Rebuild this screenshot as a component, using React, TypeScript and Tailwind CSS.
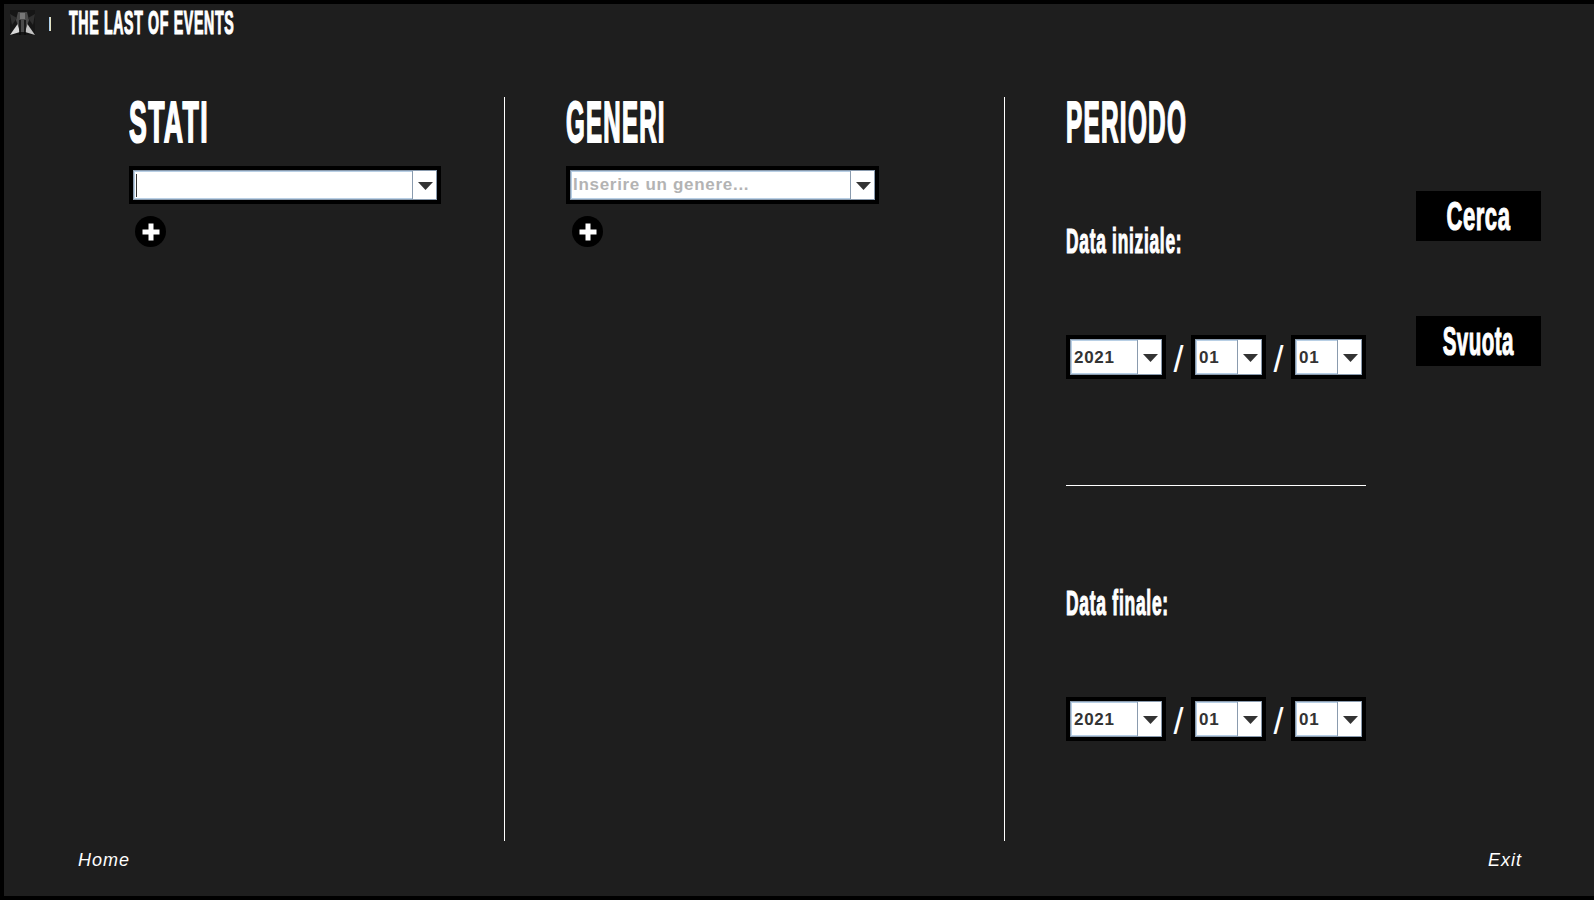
const anton = "font-['Liberation_Sans_Narrow','Liberation_Sans',sans-serif] font-bold text-white";

function Arrow() {
  return (
    <svg width="15" height="8" viewBox="0 0 15 8" className="mt-[1px] ml-[1px] block">
      <path d="M0 0H15L7.5 8Z" fill="#333333" />
    </svg>
  );
}

function Combo({
  outer,
  h = "h-[44px]",
  text,
  placeholder,
  caret,
}: {
  outer: string;
  h?: string;
  text?: string;
  placeholder?: string;
  caret?: boolean;
}) {
  return (
    <div className={`${outer} ${h} bg-black p-[4px] shrink-0`}>
      <div className="flex h-full w-full border border-[#8a9bae] bg-white">
        <div className="flex min-w-0 flex-1 items-center overflow-hidden border border-[#b8cfe5] border-r-0 pl-[2px] pt-[1px] font-['Liberation_Sans',sans-serif] text-[17px] font-bold tracking-[0.7px] text-[#333333]">
          {caret && <span className="-ml-[1px] h-[23px] w-[1px] bg-[#333333]" />}
          {text}
          {placeholder && <span className="-ml-[1px] pb-[2px] text-[#b3b3b3]">{placeholder}</span>}
        </div>
        <div className="flex w-[24px] items-center justify-center border-l border-[#8a9bae]">
          <Arrow />
        </div>
      </div>
    </div>
  );
}

function Plus() {
  return (
    <div className="ml-[6px] mt-[12px] flex h-[31px] w-[31px] items-center justify-center rounded-full bg-black">
      <svg width="18" height="18" viewBox="0 0 18 18">
        <path d="M6.5 0.5H11.5V6.5H17.5V11.5H11.5V17.5H6.5V11.5H0.5V6.5H6.5Z" fill="#ffffff" />
      </svg>
    </div>
  );
}

function Heading({ children, scale }: { children: string; scale: string }) {
  return (
    <h2 className={`${anton} ${scale} h-[69px] w-[300px] whitespace-nowrap text-[58px] leading-[50px] tracking-[3px] origin-top-left [-webkit-text-stroke:2px_white]`}>
      {children}
    </h2>
  );
}

function DateRow() {
  return (
    <div className="flex h-[44px] w-[300px] items-center">
      <Combo outer="w-[100px]" text="2021" />
      <Slash />
      <Combo outer="w-[75px]" text="01" />
      <Slash />
      <Combo outer="w-[75px]" text="01" />
    </div>
  );
}

function Slash() {
  return (
    <span className="w-[25px] pt-[5px] text-center font-['Liberation_Sans',sans-serif] text-[36px] leading-none text-white">/</span>
  );
}

function Label({ children, scale }: { children: string; scale: string }) {
  return (
    <div className={`${anton} ${scale} h-[32px] whitespace-nowrap text-[35px] leading-[32px] tracking-[1.5px] origin-top-left [-webkit-text-stroke:1.2px_white]`}>
      {children}
    </div>
  );
}

function ActionButton({ children, scale }: { children: string; scale: string }) {
  return (
    <button className="flex h-[50px] w-[125px] items-center justify-center bg-black">
      <span className={`${anton} ${scale} whitespace-nowrap text-[41px] leading-none tracking-[1px] [-webkit-text-stroke:1.2px_white]`}>
        {children}
      </span>
    </button>
  );
}

export default function App() {
  return (
    <div className="flex h-[900px] w-[1594px] flex-col overflow-hidden border-4 border-r-0 border-black bg-[#1e1e1e]">
      <header className="flex h-[33px] shrink-0 items-start pl-[6px] pt-[6px]">
        <svg width="25" height="25" viewBox="0 0 25 25" className="shrink-0">
          <rect width="25" height="25" fill="#161616" />
          <path d="M0 25L9 12L10 22Z" fill="#d8d8d8" />
          <path d="M25 25L16 12L15 22Z" fill="#c4c4c4" />
          <path d="M8 2H17L19 10L15 22H10L6 10Z" fill="#4a4a4a" />
          <path d="M10 3H15V9H10Z" fill="#777777" />
          <path d="M0 4L7 8L2 15Z" fill="#2f2f2f" />
          <path d="M25 4L18 8L23 15Z" fill="#2f2f2f" />
          <path d="M10 10V25M15 10V25" stroke="#0b0b0b" strokeWidth="1.5" />
        </svg>
        <span className="ml-[14px] mt-[7px] h-[14px] w-[2px] shrink-0 bg-linear-to-r from-[#8ec5ff] to-[#ffe9a8]" />
        <h1 className={`${anton} ml-[18px] whitespace-nowrap text-[33px] leading-[26px] tracking-[1.5px] origin-top-left scale-x-[0.43] [-webkit-text-stroke:1.2px_white]`}>
          THE LAST OF EVENTS
        </h1>
      </header>

      <main className="flex h-[804px] shrink-0 pt-[60px]">
        <section className="ml-[125px] w-[375px] shrink-0">
          <Heading scale="scale-x-[0.46]">STATI</Heading>
          <Combo outer="w-[312px]" h="h-[38px]" caret />
          <Plus />
        </section>

        <section className="w-[500px] shrink-0 border-l border-white pl-[61px]">
          <Heading scale="scale-x-[0.415]">GENERI</Heading>
          <Combo outer="w-[313px]" h="h-[38px]" placeholder="Inserire un genere..." />
          <Plus />
        </section>

        <section className="flex flex-1 gap-[50px] border-l border-white pl-[61px]">
          <div className="w-[300px] shrink-0">
            <Heading scale="scale-x-[0.42]">PERIODO</Heading>
            <div className="mt-[59px]"><Label scale="scale-x-[0.495]">Data iniziale:</Label></div>
            <div className="mt-[78px]"><DateRow /></div>
            <div className="mt-[106px] h-[1px] w-[300px] bg-white" />
            <div className="mt-[101px]"><Label scale="scale-x-[0.498]">Data finale:</Label></div>
            <div className="mt-[78px]"><DateRow /></div>
          </div>
          <div className="flex flex-col gap-[75px] pt-[94px]">
            <ActionButton scale="scale-x-[0.537]">Cerca</ActionButton>
            <ActionButton scale="scale-x-[0.5]">Svuota</ActionButton>
          </div>
        </section>
      </main>

      <footer className="flex flex-1 items-start justify-between pl-[74px] pr-[72px] pt-[8px] font-['Liberation_Sans',sans-serif] text-[18px] italic leading-[22px] tracking-[1px] text-white">
        <a>Home</a>
        <a>Exit</a>
      </footer>
    </div>
  );
}
